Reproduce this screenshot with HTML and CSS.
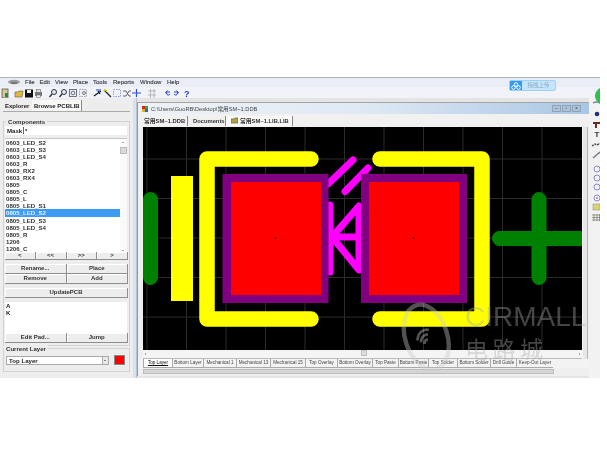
FILE: index.html
```html
<!DOCTYPE html>
<html lang="en">
<head>
<meta charset="utf-8">
<title>Browse PCBLIB</title>
<link rel="stylesheet" href="styles.css">
</head>
<body>
<div class="screen">
  <div class="menubar">
    <svg class="app-logo" width="14" height="6" viewBox="0 0 14 6"><ellipse cx="7" cy="3" rx="6" ry="2.2" fill="#9a9a9a"/><rect x="4" y="3" width="6" height="2" fill="#777"/></svg>
    <span class="m1">File</span><span class="m2">Edit</span><span class="m3">View</span><span class="m4">Place</span><span class="m5">Tools</span><span class="m6">Reports</span><span class="m7">Window</span><span class="m8">Help</span>
  </div>
  <div class="toolbar">
    <svg width="200" height="11" viewBox="0 0 200 11">
      <rect x="2" y="1" width="6" height="9" fill="#d8c890" stroke="#555" stroke-width=".8"/><rect x="5" y="5" width="3" height="4" fill="#285"/>
      <path d="M15 9V4h3l1-1h4l-1 6z" fill="#e2b93c" stroke="#765" stroke-width=".7"/>
      <rect x="25" y="1.500" width="8" height="8" fill="#111"/><rect x="27" y="2" width="4" height="3" fill="#eee"/>
      <path d="M35 4h7v4h-7z" fill="#777"/><rect x="36.500" y="1.500" width="4" height="3" fill="#ddd" stroke="#555" stroke-width=".5"/><rect x="36.500" y="7" width="4" height="2.500" fill="#eee" stroke="#555" stroke-width=".5"/>
      <g fill="#dfe8f5" stroke="#334" stroke-width="1"><circle cx="54" cy="4" r="2.500"/><circle cx="64" cy="4" r="2.500"/></g>
      <path d="M52 6l-2.500 3M62 6l-2.500 3" stroke="#334" stroke-width="1.400"/>
      <rect x="69.500" y="1.500" width="7" height="7" fill="#e6ecf5" stroke="#556" stroke-width=".8"/><circle cx="73" cy="5" r="1.800" fill="none" stroke="#445" stroke-width=".7"/>
      <rect x="79.500" y="1.500" width="7" height="7" fill="#f0f0f0" stroke="#88a" stroke-width=".8" stroke-dasharray="1.500 1"/><circle cx="84" cy="5" r="1.500" fill="none" stroke="#445" stroke-width=".7"/>
      <path d="M94 8l7-5M98 3l2 3" stroke="#123" stroke-width="1.300" fill="none"/><path d="M96 2h5" stroke="#24c" stroke-width="1"/>
      <path d="M104 2l7 7" stroke="#222" stroke-width="1.200"/><path d="M104 2l3 1" stroke="#cc0" stroke-width="1.500"/>
      <rect x="113.500" y="1.500" width="7" height="7" fill="none" stroke="#7a86c8" stroke-width=".8" stroke-dasharray="1.500 1"/>
      <path d="M123 3h3l3 5h2M123 8h3l3-5h2" stroke="#556" stroke-width=".9" fill="none"/>
      <path d="M136.500 1v8M132 5h9" stroke="#2a50d8" stroke-width="1.200"/>
      <path d="M148 3h8M148 7h8M150.500 1v9M154 1v9" stroke="#aaa" stroke-width=".8"/>
      <path d="M170 4h-4l1.500-1.500M165.500 4l1.500 1.500M166 4c0 3 3 4 4 2" stroke="#2742d8" stroke-width="1" fill="none"/>
      <path d="M174 4h4l-1.500-1.500M178.500 4l-1.500 1.500M178 4c0 3-3 4-4 2" stroke="#2742d8" stroke-width="1" fill="none"/>
      <text x="184" y="8.500" class="help-glyph">?</text>
    </svg>
  </div>
  <div class="main">
    <aside class="left">
      <div class="tabs"><span class="tab">Explorer</span><span class="tab tab-active">Browse PCBLIB</span></div>
      <div class="group comp">
        <span class="legend">Components</span>
        <div class="mask">Mask <span class="caret">*</span></div>
        <div class="list">
          <ul>
            <li>0603_LED_S2</li><li>0603_LED_S3</li><li>0603_LED_S4</li><li>0603_R</li><li>0603_RX2</li><li>0603_RX4</li><li>0805</li><li>0805_C</li><li>0805_L</li><li>0805_LED_S1</li><li class="sel">0805_LED_S2</li><li>0805_LED_S3</li><li>0805_LED_S4</li><li>0805_R</li><li>1206</li><li>1206_C</li>
          </ul>
          <div class="vscroll"><i class="up"></i><b></b><i class="down"></i></div>
        </div>
        <div class="btns b4"><button>&lt;</button><button>&lt;&lt;</button><button>&gt;&gt;</button><button>&gt;</button></div>
        <div class="btns b2 rename"><button>Rename...</button><button>Place</button><button>Remove</button><button>Add</button></div>
        <div class="btns update"><button>UpdatePCB</button></div>
        <div class="pads"><div>A</div><div>K</div></div>
        <div class="btns b2"><button>Edit Pad...</button><button>Jump</button></div>
      </div>
      <div class="group layer">
        <span class="legend">Current Layer</span>
        <div class="layer-row">
          <div class="select"><span>Top Layer</span><i></i></div>
          <div class="swatch"></div>
        </div>
      </div>
    </aside>
    <div class="splitter"></div>
    <section class="mdi">
      <div class="win">
        <div class="title">
          <svg width="6" height="6" viewBox="0 0 7 7"><rect width="3.500" height="3.500" fill="#d22"/><rect x="3.500" width="3.500" height="3.500" fill="#2a5"/><rect y="3.500" width="3.500" height="3.500" fill="#e0b020"/><rect x="3.500" y="3.500" width="3.500" height="3.500" fill="#26c"/></svg>
          <span>C:\Users\GuoRB\Desktop\常用SM~1.DDB</span>
          <div class="winbtns"><i>–</i><i>▫</i><i>×</i></div>
        </div>
        <div class="doc-tabs">
          <span class="d1">常用SM~1.DDB</span><span class="d2">Documents</span>
          <span class="d3"><svg width="7" height="7" viewBox="0 0 7 7"><path d="M0 6V2h3l1-1h3v5z" fill="#b5a23c" stroke="#565" stroke-width=".7"/></svg>常用SM~1.LIB.LIB</span>
        </div>
        <div class="work">
          <div class="canvas-col">
            <svg class="canvas" width="439" height="223" viewBox="143 127 439 223">
              <rect x="143" y="127" width="439" height="223" fill="#000"/>
              <path class="grid" d="M147 127v223M186.500 127v223M226 127v223M265.500 127v223M305 127v223M344.500 127v223M384 127v223M423.500 127v223M463 127v223M502.500 127v223M542 127v223M143 159h439M143 198.500h439M143 238h439M143 277.500h439M143 317h439"/>
              <g class="magenta">
                <path d="M353 160L328 184M368 168L345 191.500"/>
                <path d="M330 205V272M332 237L359 206V270L332 237H359"/>
              </g>
              <rect x="222.500" y="174" width="106" height="129" fill="#800080"/>
              <rect x="361" y="174" width="106" height="129" fill="#800080"/>
              <rect x="231" y="182" width="90" height="113" fill="#f00"/>
              <rect x="369" y="182" width="90" height="113" fill="#f00"/>
              <circle cx="275.500" cy="238" r="1.200" fill="#800"/><circle cx="413.500" cy="238" r="1.200" fill="#800"/>
              <rect x="171" y="176" width="22" height="125" fill="#ff0"/>
              <g class="yellow">
                <path d="M311 159H207V319H311"/>
                <path d="M380 159H482V319H380"/>
              </g>
              <g class="green">
                <path d="M150.500 199.500V277.500"/>
                <path d="M539 199.500V277.500M499.500 238.500H590"/>
              </g>
            </svg>
            <div class="hscroll"><i class="left-a"></i><b></b><i class="right-a"></i></div>
          </div>
          <div class="vbar"><b></b></div>
        </div>
        <div class="layer-tabs">
          <span class="lt active w29">Top Layer</span><span class="lt w31">Bottom Layer</span><span class="lt w33">Mechanical 1</span><span class="lt w34">Mechanical 13</span><span class="lt w35">Mechanical 15</span><span class="lt w32">Top Overlay</span><span class="lt w35">Bottom Overlay</span><span class="lt w26">Top Paste</span><span class="lt w30">Bottom Paste</span><span class="lt w29">Top Solder</span><span class="lt w33">Bottom Solder</span><span class="lt w26">Drill Guide</span><span class="lt w37">Keep-Out Layer</span>
        </div>
        <div class="bottom-bar"><b></b></div>
      </div>
    </section>
    <div class="rtools">
      <svg width="12" height="124" viewBox="0 0 12 124">
        <path d="M2 5c2-1.500 6-1.500 8 0" stroke="#8a7ac8" stroke-width="1.500" fill="none"/>
        <circle cx="6" cy="16" r="2.300" fill="#23308a"/>
        <path d="M2 24h7v2H6v4H4v-4H2z" fill="#6a2b22"/>
        <text x="6" y="39" class="t-glyph">T</text>
        <path d="M1 48l3-2 2 1 4-2" stroke="#445" stroke-width="1.500" fill="none" stroke-dasharray="2 1"/>
        <path d="M2 60l7-6" stroke="#778" stroke-width="1.600"/>
        <g fill="none" stroke="#8a8ad0" stroke-width="1"><circle cx="6" cy="71" r="3"/><circle cx="6" cy="80" r="3"/><circle cx="6" cy="89" r="3"/><circle cx="6" cy="100" r="3"/></g>
        <circle cx="6" cy="100" r=".8" fill="#557"/>
        <rect x="2" y="106" width="7" height="6" fill="#dcd26e" stroke="#998" stroke-width=".6"/>
        <path d="M1 117h9M1 119.500h9M1 122h9M3 116v7M6 116v7M8.500 116v7" stroke="#776" stroke-width=".7"/>
      </svg>
    </div>
  </div>
  <div class="upload"><span class="cloud"><svg width="10" height="8" viewBox="0 0 10 8"><g fill="none" stroke="#fff" stroke-width="1"><circle cx="5" cy="2.500" r="1.800"/><circle cx="2.500" cy="5.500" r="1.800"/><circle cx="7.500" cy="5.500" r="1.800"/></g></svg></span><span class="up-text">拖拽上传</span></div>
  <div class="green-orb"></div>
  <div class="watermark">
    <svg width="56" height="74" viewBox="0 0 64 84"><g fill="none" stroke="#ccc"><ellipse cx="30" cy="42" rx="24" ry="38" stroke-width="5" transform="rotate(-18 30 42)"/><path d="M20 46c0-8 6-14 13-12M24 48c0-5 3-9 8-9M28 50c0-3 1-5 4-5" stroke-width="3"/></g></svg>
    <div class="wm-text"><div class="wm-en">CIRMALL</div><div class="wm-cn">电路城</div></div>
  </div>
</div>
</body>
</html>
```
FILE: styles.css
```css
* { box-sizing: border-box; }
html, body { margin: 0; padding: 0; background: #fff; }
body { width: 607px; height: 457px; overflow: hidden; position: relative; }
.screen {
  position: relative; width: 600px; height: 301px; margin-top: 77px;
  background: #eeeeee; border-top: 1px solid #aeb4bd; overflow: hidden;
  font-family: "Liberation Sans", sans-serif; color: #222; filter: blur(.45px);
}
ul { list-style: none; margin: 0; padding: 0; }

.menubar { position: relative; height: 9px; background: #e9edf6; font-size: 6px; line-height: 8px; color: #444; }
.menubar span { position: absolute; top: 0; -webkit-text-stroke: .15px #444; }
.app-logo { position: absolute; left: 7px; top: 1px; }
.m1 { left: 25px; } .m2 { left: 39.500px; } .m3 { left: 55px; } .m4 { left: 73px; }
.m5 { left: 93px; } .m6 { left: 113px; } .m7 { left: 140px; } .m8 { left: 167px; }

.toolbar { height: 11px; background: #f1f3f8; padding-top: 1px; }
.toolbar svg { display: block; }
.help-glyph { font: bold 9px "Liberation Sans", sans-serif; fill: #2742d8; }

.main { display: flex; height: 280px; background: #efefef; }

.left { width: 133px; flex: none; background: #ededed; padding: 2px 3px 0 3px; }
.tabs { display: flex; height: 12px; font-size: 6px; font-weight: bold; line-height: 10px; border-bottom: 1px solid #aaa; white-space: nowrap; }
.tab { padding: 1px 2px 0 2px; width: 29px; }
.tab-active { width: 50px; padding-left: 2px; background: #f8f8f8; border-right: 1px solid #888; }

.group { position: relative; border: 1px solid #d2d2d2; }
.legend { position: absolute; left: 2px; top: -4px; background: #ededed; padding: 0 2px; font-size: 6.100px; line-height: 7px; font-weight: bold; color: #333; white-space: nowrap; }
.comp { margin-top: 9px; height: 225px; width: 127px; padding: 4px 1px 0 1px; }
.mask { height: 9px; background: #fff; font-size: 6.100px; font-weight: bold; line-height: 9px; padding-left: 2px; width: 122px; }
.caret { border-left: 1px solid #666; margin-left: -1px; padding-left: 1px; }
.list { display: flex; margin-top: 3px; height: 114px; width: 122px; background: #fff; border-top: 1px solid #c8c8c8; }
.list ul { flex: 1; padding-top: 0; }
.list li { height: 7.050px; font-size: 6.100px; line-height: 7px; font-weight: bold; color: #333; padding-left: 1px; white-space: nowrap; }
.list li.sel { background: #3d9bf5; color: #e8f2ff; }
.vscroll { width: 7px; position: relative; background: #fafafa; }
.vscroll b { position: absolute; top: 8px; left: 0; width: 7px; height: 7px; background: #d9d9d9; border: 1px solid #bcbcbc; }
.vscroll .up, .vscroll .down { position: absolute; left: 2px; width: 0; height: 0; border: 1.500px solid transparent; }
.vscroll .up { top: 2px; border-bottom-color: #555; }
.vscroll .down { bottom: 0; border-top-color: #555; }

.btns { display: grid; width: 123px; }
.btns button {
  margin: 0; padding: 0; height: 9px; background: #ededed; color: #333;
  font: bold 6px/7px "Liberation Sans", sans-serif;
  border: 0; border-right: 1px solid #8e8e8e; border-bottom: 1px solid #8e8e8e; box-shadow: inset 1px 1px 0 #fff;
}
.b4 { grid-template-columns: repeat(4, 1fr); height: 8px; }
.b4 button { height: 8px; }
.b2 { grid-template-columns: 1fr 1fr; }
.b2 button { height: 10px; }
.rename { margin-top: 4px; }
.update { margin-top: 4px; }
.update button { height: 10px; width: 100%; }
.pads { margin-top: 4px; height: 31px; width: 122px; background: #fff; font-size: 6.100px; line-height: 7px; font-weight: bold; padding: 0 0 0 1px; }

.layer { margin-top: 2px; width: 127px; height: 24px; }
.layer .legend { left: 0; }
.layer-row { display: flex; align-items: center; gap: 5px; padding: 6px 0 0 2px; }
.select { position: relative; width: 103px; height: 9px; background: #fff; border: 1px solid #aaa; font-size: 6.100px; line-height: 7px; font-weight: bold; padding-left: 2px; }
.select i { position: absolute; right: 0; top: 0; width: 6px; height: 7px; background: #e8e8e8; border-left: 1px solid #aaa; }
.select i::after { content: ""; position: absolute; left: 1px; top: 3px; border: 1.500px solid transparent; border-top-color: #222; }
.swatch { width: 11px; height: 10px; background: #f00; border: 1px solid #888; }

.splitter { width: 4px; flex: none; background: #d6e2ef; border-right: 1px solid #b4c2d2; }

.mdi { flex: none; width: 452px; padding-top: 4px; background: #e4e4e4; }
.win { height: 274px; background: #efefef; border-left: 1px solid #9a9a9a; border-top: 1px solid #a5a5a5; }
.title { position: relative; display: flex; align-items: center; gap: 3px; height: 11px; padding-left: 4px; background: linear-gradient(90deg, #eef2f7 0%, #dfe9f4 50%, #a9c6e4 100%); font-size: 5.700px; color: #444; font-family: "Liberation Sans", "Noto Sans CJK SC", sans-serif; }
.winbtns { position: absolute; right: 8px; top: 2px; display: flex; gap: 1px; }
.winbtns i { width: 9px; height: 7px; background: #b0c4d8; border: 1px solid #8fa3b8; font-size: 5px; line-height: 5px; text-align: center; font-style: normal; color: #345; }
.doc-tabs { display: flex; align-items: center; height: 13px; background: #f1f1f1; font-size: 5.800px; font-weight: bold; color: #333; font-family: "Liberation Sans", "Noto Sans CJK SC", sans-serif; }
.doc-tabs span { display: flex; align-items: center; gap: 2px; height: 10px; border-right: 1px solid #888; white-space: nowrap; }
.d1 { width: 50px; padding-left: 6px; }
.d2 { width: 38px; padding-left: 5px; }
.d3 { width: 67px; padding-left: 5px; background: #f9f9f9; }

.work { display: flex; padding-left: 5px; height: 232px; }
.canvas-col { width: 439px; flex: none; }
.canvas { display: block; }
.hscroll { position: relative; height: 9px; background: #f4f4f4; border-bottom: 1px solid #bbb; }
.hscroll b { position: absolute; left: 218px; top: 0; width: 6px; height: 6px; background: #ddd; border: 1px solid #c0c0c0; }
.left-a, .right-a { position: absolute; top: 3px; border: 1.500px solid transparent; }
.left-a { left: 1px; border-right-color: #555; }
.right-a { right: 1px; border-left-color: #555; }
.vbar { position: relative; width: 6px; background: #dcdcdc; border-left: 1px solid #f8f8f8; border-right: 1px solid #b5b5b5; }
.vbar b { display: block; height: 100%; background: #e6e6e6; }

.layer-tabs { display: flex; height: 9px; padding-left: 5px; background: #f3f3f3; font-size: 4.600px; line-height: 8px; color: #444; white-space: nowrap; overflow: hidden; }
.lt { flex: none; text-align: center; border-left: 1px solid #aaa; border-bottom: 1px solid #aaa; }
.lt.active { background: #fff; color: #111; text-decoration: underline; }
.w26 { width: 26px; } .w29 { width: 29px; } .w30 { width: 30px; } .w31 { width: 31px; }
.w32 { width: 32px; } .w33 { width: 33px; } .w34 { width: 34px; } .w35 { width: 35px; } .w37 { width: 37px; }
.bottom-bar { height: 7px; padding: 1px 35px 0 5px; background: #efefef; }
.bottom-bar b { display: block; height: 5px; background: #d5d5d5; border: 1px solid #bdbdbd; }

.rtools { flex: none; width: 11px; background: #f2f2f2; }
.rtools svg { display: block; margin-left: 2px; }
.t-glyph { font: bold 8px "Liberation Sans", sans-serif; fill: #333; text-anchor: middle; }

.upload { position: absolute; left: 509px; top: 2px; width: 47px; height: 11px; display: flex; border: 1px solid #9ed0fb; border-radius: 2px; background: #c5e5fd; }
.cloud { width: 12px; display: flex; align-items: center; justify-content: center; background: #2f9bf3; }
.up-text { flex: 1; text-align: center; font: 5.500px/9px "Noto Sans CJK SC", sans-serif; color: #8aa6c0; }
.green-orb { position: absolute; left: 595px; top: 9px; width: 18px; height: 18px; border-radius: 50%; background: #2fc04e; }

.watermark { position: absolute; left: 400px; top: 222px; display: flex; gap: 9px; pointer-events: none; opacity: .4; }
.wm-text { color: #aaa; padding-top: 5px; }
.wm-en { font: 28px/24px "Liberation Sans", sans-serif; letter-spacing: 0; white-space: nowrap; }
.wm-cn { margin-top: 8px; font: 23px/22px "Noto Sans CJK SC", sans-serif; letter-spacing: 4.500px; white-space: nowrap; }

.grid { fill: none; stroke: #2b2b2b; stroke-width: 1; }
.magenta { fill: none; stroke: #f0f; stroke-width: 7; stroke-linecap: round; stroke-linejoin: round; }
.yellow { fill: none; stroke: #ff0; stroke-width: 15.500; stroke-linecap: round; stroke-linejoin: round; }
.green { fill: none; stroke: #008000; stroke-width: 15; stroke-linecap: round; }
```
